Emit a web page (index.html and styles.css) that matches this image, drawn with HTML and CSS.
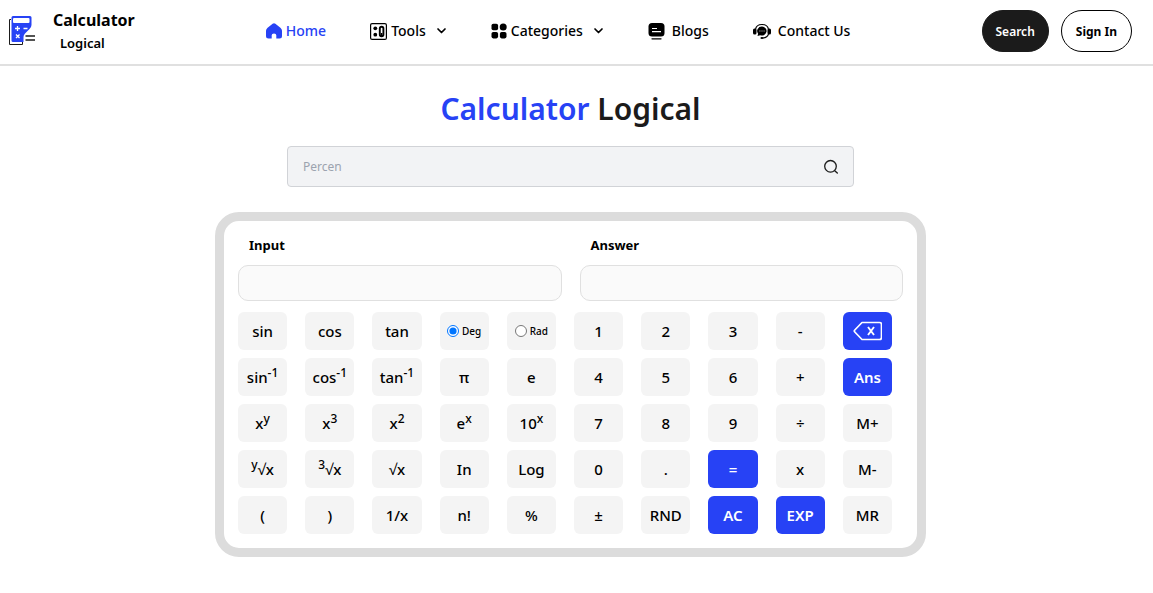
FILE: index.html
```html
<!DOCTYPE html>
<html lang="en">
<head>
<meta charset="utf-8">
<meta name="viewport" content="width=device-width, initial-scale=1">
<title>Calculator Logical</title>
<link rel="stylesheet" href="styles.css">
</head>
<body>
<header class="header">
  <a class="brand" href="#">
    <svg class="brand-logo" width="28" height="32" viewBox="0 0 28 32" aria-hidden="true">
      <path d="M3 4.500H1.500V29.500H14.500V27" fill="none" stroke="#1b1b1b" stroke-width="1"/>
      <path d="M5 1h17q1.500 0 1.500 1.500V10q0 2-2 4l-4.500 4.500q-1.500 1.500-1.500 3.500V27H5q-1.500 0-1.500-1.500V2.500Q3.500 1 5 1z" fill="#2742f5"/>
      <rect x="5" y="3" width="16.500" height="5" rx="1" fill="#fff"/>
      <path d="M7 13.500h5M9.500 11v5M15.500 13.500h4M8 19.500l3.500 3.500M11.500 19.500l-3.500 3.500" stroke="#fff" stroke-width="1.300"/>
      <path d="M17.500 21h9.500M17.500 25h9.500" stroke="#1b1b1b" stroke-width="1.700"/>
    </svg>
    <span class="brand-text"><span class="brand-name">Calculator</span><span class="brand-sub">Logical</span></span>
  </a>
  <nav class="nav">
    <a class="nav-link nav-active" href="#">
      <svg width="16" height="16" viewBox="0 0 16 16" aria-hidden="true"><path d="M6.600.7q1.400-1.100 2.800 0l5 4q1.600 1.300 1.600 3V13q0 2.500-2.500 2.500H10.300v-3.200Q10.300 10.500 8 10.500t-2.300 1.800v3.200H2.500Q0 15.500 0 13V7.700q0-1.700 1.600-3z" fill="currentColor"/></svg>
      <span>Home</span></a>
    <a class="nav-link" href="#">
      <svg width="17" height="17" viewBox="0 0 17 17" aria-hidden="true"><rect x=".6" y=".6" width="15.800" height="15.800" rx="1.500" fill="none" stroke="currentColor" stroke-width="1.200"/><circle cx="5.300" cy="5.300" r="1.900" fill="currentColor"/><circle cx="5.300" cy="11.700" r="1.900" fill="currentColor"/><rect x="9.800" y="3.700" width="3.600" height="9.600" rx="1.700" fill="none" stroke="currentColor" stroke-width="1.900"/><path d="M11.600 10v3" stroke="currentColor" stroke-width="1.500"/></svg>
      <span>Tools</span>
      <svg class="chevron" width="11" height="8" viewBox="0 0 11 8" aria-hidden="true"><path d="M2 2l3.500 3.500L9 2" fill="none" stroke="currentColor" stroke-width="1.700" stroke-linecap="round" stroke-linejoin="round"/></svg></a>
    <a class="nav-link" href="#">
      <svg width="16" height="16" viewBox="0 0 16 16" fill="currentColor" aria-hidden="true"><rect x=".5" y=".8" width="6.600" height="6.400" rx="1.800"/><circle cx="12.200" cy="4" r="3.500"/><rect x=".5" y="9" width="6.600" height="6.400" rx="1.800"/><rect x="8.900" y="9" width="6.600" height="6.400" rx="1.800"/></svg>
      <span>Categories</span>
      <svg class="chevron" width="11" height="8" viewBox="0 0 11 8" aria-hidden="true"><path d="M2 2l3.500 3.500L9 2" fill="none" stroke="currentColor" stroke-width="1.700" stroke-linecap="round" stroke-linejoin="round"/></svg></a>
    <a class="nav-link nav-wide" href="#">
      <svg width="17" height="17" viewBox="0 0 17 17" aria-hidden="true"><rect x=".5" y="0" width="16" height="13.500" rx="3.500"/><path d="M4 5.500h5M4 8.700h9" stroke="#fff" stroke-width="1.200"/><path d="M4 15.800h9" stroke="#000" stroke-width="1.300" stroke-linecap="round"/></svg>
      <span>Blogs</span></a>
    <a class="nav-link nav-wide" href="#">
      <svg width="18" height="17" viewBox="0 0 18 17" aria-hidden="true"><path d="M2.500 6.500C3 3 5.500 1.500 9 1.500s6 1.500 6.500 5" fill="none" stroke="#000" stroke-width="1.200"/><rect x="0" y="5.500" width="3.500" height="6" rx="1.500"/><rect x="14.500" y="5.500" width="3.500" height="6" rx="1.500"/><path d="M9 3.500a4.700 4.500 0 1 1-1.800 8.700L4.500 13l.6-2.300A4.700 4.500 0 0 1 9 3.500z"/><path d="M6.300 8h5.400" stroke="#aaa" stroke-width="1.100" stroke-dasharray="1.200 .9"/><path d="M15.500 11q-1 3.500-5.500 4" fill="none" stroke="#000" stroke-width="1.100"/><ellipse cx="9" cy="15" rx="1.600" ry=".9"/></svg>
      <span>Contact Us</span></a>
  </nav>
  <div class="actions">
    <button class="pill pill-dark" type="button">Search</button>
    <button class="pill" type="button">Sign In</button>
  </div>
</header>
<main class="main">
  <h1 class="title"><span class="title-accent">Calculator</span> Logical</h1>
  <form class="search">
    <input class="search-input" type="text" placeholder="Percen" aria-label="Search calculators">
    <button class="search-button" type="button" aria-label="Search"><svg width="16" height="16" viewBox="0 0 16 16" aria-hidden="true"><path d="M11.700 11.700L14.300 14" stroke="#1b1b1b" stroke-width="1.400" stroke-linecap="round"/><circle cx="7.500" cy="7.300" r="5.800" fill="none" stroke="#1b1b1b" stroke-width="1.300"/></svg></button>
  </form>
  <section class="calculator">
    <div class="fields">
      <div class="field"><label class="field-label" for="input">Input</label><input class="field-input" id="input" type="text"></div>
      <div class="field"><label class="field-label" for="answer">Answer</label><input class="field-input" id="answer" type="text" readonly></div>
    </div>
    <div class="keys">
      <button class="key" type="button">sin</button>
      <button class="key" type="button">cos</button>
      <button class="key" type="button">tan</button>
      <label class="key key-mode"><input class="radio" type="radio" name="mode" checked>Deg</label>
      <label class="key key-mode"><input class="radio" type="radio" name="mode">Rad</label>
      <button class="key" type="button">1</button>
      <button class="key" type="button">2</button>
      <button class="key" type="button">3</button>
      <button class="key" type="button">-</button>
      <button class="key key-blue" type="button" aria-label="Backspace"><svg width="29" height="20" viewBox="0 0 29 20" aria-hidden="true"><path d="M9 1.500H26.500q2 0 2 2V16.500q0 2-2 2H9L1.800 11q-1-1 0-2z" fill="none" stroke="#fff" stroke-width="1.700" stroke-linejoin="round"/><path d="M15 6l6 8M21 6l-6 8" stroke="#fff" stroke-width="1.900"/></svg></button>

      <button class="key" type="button"><span>sin<sup>-1</sup></span></button>
      <button class="key" type="button"><span>cos<sup>-1</sup></span></button>
      <button class="key" type="button"><span>tan<sup>-1</sup></span></button>
      <button class="key" type="button">π</button>
      <button class="key" type="button">e</button>
      <button class="key" type="button">4</button>
      <button class="key" type="button">5</button>
      <button class="key" type="button">6</button>
      <button class="key" type="button">+</button>
      <button class="key key-blue" type="button">Ans</button>

      <button class="key" type="button"><span>x<sup>y</sup></span></button>
      <button class="key" type="button"><span>x<sup>3</sup></span></button>
      <button class="key" type="button"><span>x<sup>2</sup></span></button>
      <button class="key" type="button"><span>e<sup>x</sup></span></button>
      <button class="key" type="button"><span>10<sup>x</sup></span></button>
      <button class="key" type="button">7</button>
      <button class="key" type="button">8</button>
      <button class="key" type="button">9</button>
      <button class="key" type="button">÷</button>
      <button class="key" type="button">M+</button>

      <button class="key" type="button"><span><sup>y</sup>√x</span></button>
      <button class="key" type="button"><span><sup>3</sup>√x</span></button>
      <button class="key" type="button">√x</button>
      <button class="key" type="button">In</button>
      <button class="key" type="button">Log</button>
      <button class="key" type="button">0</button>
      <button class="key" type="button">.</button>
      <button class="key key-blue" type="button">=</button>
      <button class="key" type="button">x</button>
      <button class="key" type="button">M-</button>

      <button class="key" type="button">(</button>
      <button class="key" type="button">)</button>
      <button class="key" type="button">1/x</button>
      <button class="key" type="button">n!</button>
      <button class="key" type="button">%</button>
      <button class="key" type="button">±</button>
      <button class="key" type="button">RND</button>
      <button class="key key-blue" type="button">AC</button>
      <button class="key key-blue" type="button">EXP</button>
      <button class="key" type="button">MR</button>
    </div>
  </section>
</main>
</body>
</html>
```

FILE: styles.css
```css
* {
  box-sizing: border-box;
}

body {
  margin: 0;
  background: #fff;
  color: #000;
  font-family: "Noto Sans", "Open Sans", sans-serif;
  font-size: 14px;
}

button,
input {
  font: inherit;
  color: inherit;
}

.header {
  display: flex;
  align-items: center;
  justify-content: space-between;
  padding: 7px 21px 9px 8px;
  min-height: 66px;
  border-bottom: 2px solid #e0e0e0;
}

.brand {
  display: flex;
  align-items: center;
  gap: 17px;
  color: inherit;
  text-decoration: none;
}

.brand-text {
  display: flex;
  flex-direction: column;
  font-weight: 700;
}

.brand-name {
  font-size: 16px;
  line-height: 24px;
}

.brand-sub {
  padding-left: 7px;
  font-size: 13px;
  font-weight: 600;
  line-height: 22px;
}

.nav {
  display: flex;
  align-items: center;
  gap: 44px;
}

.nav-link {
  display: flex;
  align-items: center;
  gap: 4px;
  color: #000;
  font-size: 14px;
  font-weight: 500;
  line-height: 20px;
  text-decoration: none;
}

.nav-wide {
  gap: 7px;
}

.nav-active {
  color: #2742f5;
}

.chevron {
  margin-left: 6px;
}

.actions {
  display: flex;
  gap: 12px;
}

.pill {
  height: 42px;
  padding: 0 14px;
  border: 1px solid #000;
  border-radius: 21px;
  background: #fff;
  font-size: 12px;
  font-weight: 700;
}

.pill-dark {
  padding: 0 13px;
  border-color: #1b1b1b;
  background: #1b1b1b;
  color: #fff;
  font-weight: 600;
}

.main {
  display: flex;
  flex-direction: column;
  align-items: center;
  padding: 22px 12px 36px 0;
}

.title {
  margin: 0;
  color: #1b1b1b;
  font-size: 30px;
  font-weight: 600;
  line-height: 42px;
}

.title-accent {
  color: #2742f5;
}

.search {
  display: flex;
  width: 100%;
  max-width: 567px;
  height: 41px;
  margin-top: 16px;
  border: 1px solid #d1d3d7;
  border-radius: 4px;
  background: #f2f3f5;
}

.search-input {
  flex: 1;
  min-width: 0;
  padding: 0 15px;
  border: 0;
  outline: 0;
  background: transparent;
  font-size: 12px;
}

.search-input::placeholder {
  color: #9ca3af;
}

.search-button {
  display: flex;
  align-items: center;
  padding: 0 14px;
  border: 0;
  background: transparent;
}

.calculator {
  width: 100%;
  max-width: 711px;
  margin-top: 25px;
  padding: 14px;
  border: 9px solid #dcdcdc;
  border-radius: 24px;
}

.fields {
  display: grid;
  grid-template-columns: 1fr 1fr;
  gap: 18px;
}

.field {
  display: flex;
  flex-direction: column;
  gap: 10px;
}

.field-label {
  padding-left: 11px;
  font-size: 13px;
  font-weight: 700;
  line-height: 20px;
}

.field-input {
  width: 100%;
  height: 36px;
  padding: 0 12px;
  border: 1px solid #e0e0e0;
  border-radius: 10px;
  background: #fafafa;
}

.keys {
  display: grid;
  grid-template-columns: repeat(10, minmax(0, 1fr));
  gap: 8px 18px;
  margin-top: 11px;
  padding-right: 11px;
}

.key {
  display: flex;
  align-items: center;
  justify-content: center;
  height: 38px;
  padding: 0;
  border: 0;
  border-radius: 6px;
  background: #f4f4f4;
  font-size: 15px;
  font-weight: 500;
  line-height: 22px;
  white-space: nowrap;
}

.key sup {
  font-size: 12px;
  line-height: 0;
}

.key-blue {
  background: #2742f5;
  color: #fff;
  font-weight: 600;
}

.key-mode {
  gap: 3px;
  font-size: 10px;
  font-weight: 500;
}

.radio {
  width: 12px;
  height: 12px;
  margin: 0;
}
```
